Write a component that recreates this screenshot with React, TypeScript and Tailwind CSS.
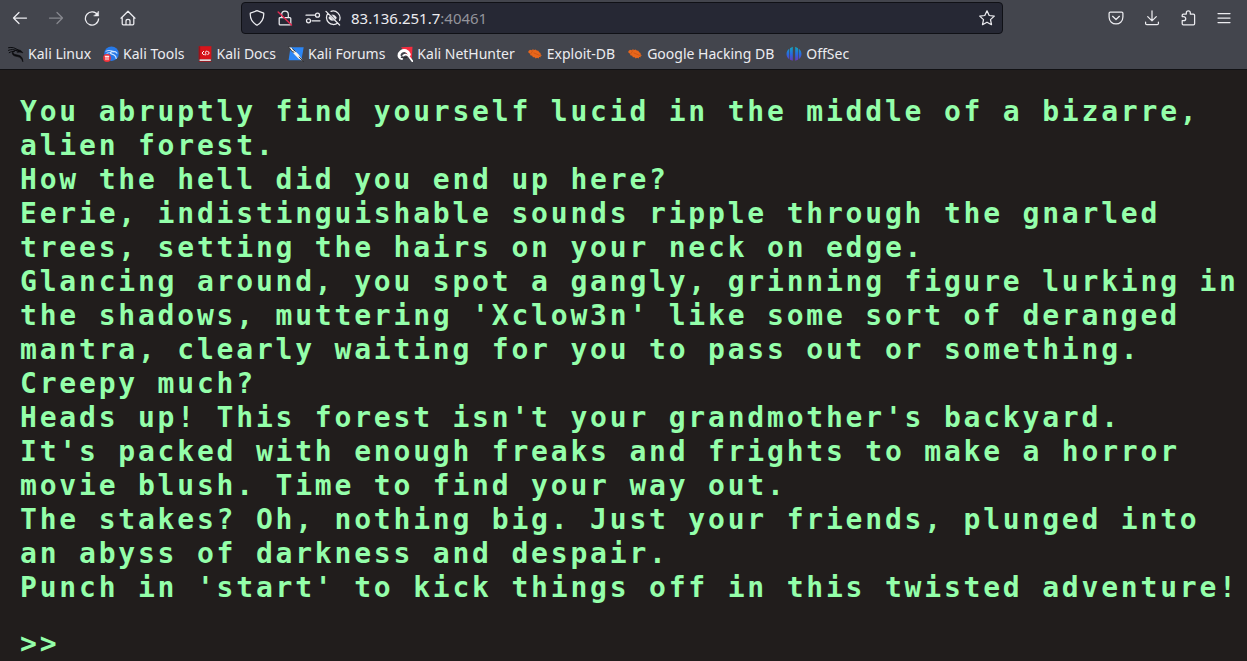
import type { ReactNode } from "react";

function Svg({ children, size = 16, stroke = "currentColor" }: { children: ReactNode; size?: number; stroke?: string }) {
  return (
    <svg width={size} height={size} viewBox="0 0 16 16" fill="none" stroke={stroke} strokeWidth="1.25" strokeLinecap="round" strokeLinejoin="round" aria-hidden="true">
      {children}
    </svg>
  );
}

const icons = {
  back: <Svg><path d="M14.500 8H1.500M7 2.500 1.500 8 7 13.500" /></Svg>,
  forward: <Svg><path d="M1.500 8h13M9 2.500 14.500 8 9 13.500" /></Svg>,
  reload: (
    <Svg>
      <path d="M13.700 5.200A6.600 6.600 0 1 0 14.600 8.800" />
      <path d="M14.600 1.400v4.600H10z" fill="currentColor" strokeWidth="0.5" />
    </Svg>
  ),
  home: <Svg><path d="M1 8.200 8 1.200l7 7M2.200 7.200v6.600c0 .7.400 1.100 1.100 1.100h9.400c.7 0 1.100-.4 1.100-1.100V7.200M6 14.700v-3.500c0-2.400 4-2.400 4 0v3.500" /></Svg>,
  shield: <Svg><path d="M8 .7 14.700 3.100c.4 5.400-1.700 9.300-6.700 12.200C3 12.400.9 8.500 1.300 3.100z" /></Svg>,
  lock: (
    <Svg>
      <path d="M4.700 7.500V4.300a3.300 3.300 0 0 1 6.600 0v3.200M3.200 7.500h9.600c.6 0 1 .4 1 1v5.400c0 .6-.4 1-1 1H3.200c-.6 0-1-.4-1-1V8.500c0-.6.400-1 1-1z" />
      <path d="M1.200 2 14.500 15" stroke="#e22850" strokeWidth="1.500" />
    </Svg>
  ),
  permissions: (
    <Svg>
      <path d="M1 5.200h8.500M7 10.800h8" />
      <circle cx="12.500" cy="5.200" r="2" />
      <circle cx="3.500" cy="10.800" r="2" />
    </Svg>
  ),
  tracking: (
    <Svg>
      <path d="M6 1.300A7 7 0 0 1 14.600 10.300M12.700 13.100A7 7 0 0 1 2.900 3.300M1 1.400 14.600 15" />
      <path d="M6.800 4.800c1.900-.3 3.700.9 4.800 2.900-.3.700-.7 1.300-1.200 1.700z" fill="currentColor" strokeWidth=".3" />
      <path d="M4.900 6.200C4.300 6.700 3.900 7.200 3.600 7.900c1 1.900 2.900 3 5.200 2.500z" fill="currentColor" strokeWidth=".3" />
    </Svg>
  ),
  star: <Svg><path d="m8 .8 2.200 4.700 5.100.6-3.800 3.500 1 5.100L8 12.200l-4.500 2.500 1-5.100L.7 6.100l5.100-.6z" /></Svg>,
  pocket: <Svg><path d="M2.300 2h11.400c.7 0 1.200.5 1.200 1.200v3.900c0 9-13.800 9-13.800 0V3.200C1.100 2.500 1.600 2 2.300 2zM4.600 6.300 8 9.500l3.400-3.200" /></Svg>,
  download: <Svg><path d="M8 .8v10M3.700 6.600 8 10.900l4.300-4.300M1.600 12.200v1.300c0 .7.500 1.200 1.200 1.200h10.400c.7 0 1.200-.5 1.200-1.200v-1.300" /></Svg>,
  extension: <Svg><path d="M2.200 6.600V5.200c0-.7.400-1.100 1.100-1.100h3V2.800c0-2.700 4-2.700 4 0v1.300h3.200c.7 0 1.100.4 1.100 1.100v8.600c0 .7-.4 1.100-1.100 1.100H3.300c-.7 0-1.100-.4-1.100-1.100v-3.200h1.500c2.700 0 2.700-3.900 0-3.900z" /></Svg>,
  menu: <Svg><path d="M2 3.500h12M2 8h12M2 12.500h12" /></Svg>,
};

const bug = (
  <Svg stroke="none">
    <path d="M1.300 5.300 3 3.800l1.800.4 1-1 1.400.8 1.500-.5 1 1 1.700.3.7 1.500 1.500.6-.1 1.300 1.500 1.300-1.500.2.300 1.500-1.700-.2-.5 1.600-1.500-.9-1.500.9-.9-1.300-1.800-.1-.7-1.400-1.900-.5-.2-1.500-1.600-1z" fill="#e8661b" />
    <path d="m5.800 4.700-2 3M7 7l5.500 2.300" stroke="#bd4e12" strokeWidth=".6" />
  </Svg>
);

const bookmarks: { name: string; icon: ReactNode }[] = [
  {
    name: "Kali Linux",
    icon: (
      <Svg stroke="#0b0c0f">
        <path d="M.5 1.700C4 .9 7 1.700 10 4M.5 4.300c3-1.200 5.500-.8 8 .2M1.200 6.700c1.500-1 3-1.400 5-1.200" strokeWidth="1" />
        <path d="M9 4c-3 .2-4.600 1.600-3.700 3.300 1.300 2.300 6.700.8 8.600 4.400.6 1 .9 2.500.9 4-.9-3-2.500-4.600-5.300-5.100-3.100-.5-5.600-1.500-5.200-4" fill="#0b0c0f" strokeWidth=".7" />
        <path d="m9.500 3.600 3.200.8 2.200 2.400-2.900-.7-2.600.2z" fill="#0b0c0f" strokeWidth=".6" />
      </Svg>
    ),
  },
  {
    name: "Kali Tools",
    icon: (
      <Svg stroke="none">
        <circle cx="8.500" cy="7.700" r="7.300" fill="#2779e8" />
        <path d="M3 5.200c3-1.500 5.700-.8 7.700.6M4 7.300c1.600-.8 3-.8 4.300-.4" stroke="#cfe5ff" strokeWidth=".9" />
        <path d="M9.800 5.300c-2.900.2-3.100 2.300-.8 2.800 2.500.6 3.800 1.300 4.200 4.200M9.800 5.300l2.800.6 1.300 1.300" stroke="#cfe5ff" strokeWidth="1.200" />
        <circle cx="4" cy="12" r="3.900" fill="#ef3038" />
        <path d="M2.200 10.300h3.600M3 10.300v3.500M5 10.300v3.500" stroke="#fff" strokeWidth="1" />
      </Svg>
    ),
  },
  {
    name: "Kali Docs",
    icon: (
      <Svg stroke="none">
        <path d="M1.800.2h12.600v13.400H1.800z" fill="#d7141a" />
        <path d="M1.800.2h1.400v13.400H1.800z" fill="#98141b" />
        <path d="M2.600 13.400h11.200v1.700H2.600z" fill="#eee" />
        <path d="M1.800 14.900h12.600v.9H1.800z" fill="#a51118" />
        <path d="M6.700 5.300 5 7l1.700 1.800M7.700 8.800C8.600 9.500 9.500 8.500 8.800 7.300S8.700 4.900 9.900 5.200M10.800 5.300 12.300 7l-1.600 1.800" stroke="#fff" strokeWidth="1" />
      </Svg>
    ),
  },
  {
    name: "Kali Forums",
    icon: (
      <Svg stroke="none">
        <path d="M2.500 1.200h13.200l-2.300 13H.6z" fill="#2b86f5" />
        <path d="m.5.900 3 .8 3.300 3 3.900 3.800 1.500 2.200 3.100 4.500-4.900-2.800-3.900-3.800-2-2.400z" fill="#f5f5f1" />
        <path d="m.5.900 3.600 4.700 1.800.6M11.200 11l4.100 4.500M4.500 2.800l2.800 2.500" stroke="#252525" strokeWidth=".9" />
      </Svg>
    ),
  },
  {
    name: "Kali NetHunter",
    icon: (
      <Svg stroke="none">
        <path d="M4 1.200 15.500.8l-.7 12.700z" fill="#f52d40" />
        <path d="M12.300 8.500C11 4.600 7 3.300 4 5.600 1 7.900 1.500 11.300 4.700 12.400" stroke="#fff" strokeWidth="3" />
        <path d="M6.200 9.700c1.700-1.500 3.800-1.300 5.500.5l3.700 5" stroke="#fff" strokeWidth="1.700" />
        <path d="m4.300 11.200 2.300.8 2.900-.6" stroke="#26272c" strokeWidth="1.200" />
      </Svg>
    ),
  },
  { name: "Exploit-DB", icon: bug },
  { name: "Google Hacking DB", icon: bug },
  {
    name: "OffSec",
    icon: (
      <Svg stroke="none">
        <defs>
          <linearGradient id="offsec" gradientUnits="userSpaceOnUse" x1="0" y1="1" x2="0" y2="15">
            <stop stopColor="#13a5bd" />
            <stop offset=".5" stopColor="#276be0" />
            <stop offset="1" stopColor="#6a35b9" />
          </linearGradient>
        </defs>
        <path d="M3.300 2.700v10.600C-.4 11-.4 5 3.300 2.700zM4 2.200 6.800.8v14l-2.800-1zM9.200.8 12 2.200v11.600l-2.800 1zM12.700 2.700c3.700 2.300 3.700 8.300 0 10.600z" fill="url(#offsec)" />
      </Svg>
    ),
  },
];

const story = [
  "You abruptly find yourself lucid in the middle of a bizarre, alien forest.",
  "How the hell did you end up here?",
  "Eerie, indistinguishable sounds ripple through the gnarled trees, setting the hairs on your neck on edge.",
  "Glancing around, you spot a gangly, grinning figure lurking in the shadows, muttering 'Xclow3n' like some sort of deranged mantra, clearly waiting for you to pass out or something.",
  "Creepy much?",
  "Heads up! This forest isn't your grandmother's backyard.",
  "It's packed with enough freaks and frights to make a horror movie blush. Time to find your way out.",
  "The stakes? Oh, nothing big. Just your friends, plunged into an abyss of darkness and despair.",
  "Punch in 'start' to kick things off in this twisted adventure!",
];

function IconButton({ label, children, disabled }: { label: string; children: ReactNode; disabled?: boolean }) {
  return (
    <button type="button" aria-label={label} disabled={disabled} className="flex size-9 items-center justify-center disabled:opacity-40">
      {children}
    </button>
  );
}

export default function App() {
  return (
    <div className="flex min-h-screen flex-col bg-[#211d1c]">
      <header className="border-b border-[#111114] bg-[#43454d] font-['Noto_Sans',sans-serif] text-[#ececf0]">
        <div className="flex h-9 items-center justify-between pr-[5px] pl-0.5">
          <nav aria-label="Navigation" className="flex">
            <IconButton label="Back">{icons.back}</IconButton>
            <IconButton label="Forward" disabled>{icons.forward}</IconButton>
            <IconButton label="Reload">{icons.reload}</IconButton>
            <IconButton label="Home">{icons.home}</IconButton>
          </nav>
          <div className="mx-[95px] flex h-8 flex-1 items-center rounded border border-[#101116] bg-[#262834] px-[7px]">
            <button type="button" aria-label="Tracking protection">{icons.shield}</button>
            <button type="button" aria-label="Connection is not secure" className="ml-3">{icons.lock}</button>
            <button type="button" aria-label="Permissions" className="ml-3">{icons.permissions}</button>
            <button type="button" aria-label="Blocked trackers" className="ml-1">{icons.tracking}</button>
            <div role="textbox" aria-label="Address" contentEditable suppressContentEditableWarning className="ml-2.5 flex-1 text-[15px] outline-none">
              83.136.251.7<span className="text-[#92939a]">:40461</span>
            </div>
            <button type="button" aria-label="Bookmark this page">{icons.star}</button>
          </div>
          <div className="flex">
            <IconButton label="Save to Pocket">{icons.pocket}</IconButton>
            <IconButton label="Downloads">{icons.download}</IconButton>
            <IconButton label="Extensions">{icons.extension}</IconButton>
            <IconButton label="Menu">{icons.menu}</IconButton>
          </div>
        </div>
        <nav aria-label="Bookmarks" className="flex h-[33px] items-center gap-3 pt-0.5 pl-2 text-sm">
          {bookmarks.map((b) => (
            <a key={b.name} href="#" className="flex items-center gap-1 whitespace-nowrap">
              {b.icon}
              {b.name}
            </a>
          ))}
        </nav>
      </header>
      <main className="flex-1 pt-[25px] pl-5 font-['DejaVu_Sans_Mono',monospace] text-[28px] leading-[34px] font-bold tracking-widest text-[#94ffaa]">
        {story.map((line) => (
          <p key={line}>{line}</p>
        ))}
        <label className="mt-[22px] flex">
          <span>&gt;&gt;</span>
          <input aria-label="Command" className="ml-2 h-8 min-w-0 flex-1 bg-transparent outline-none" />
        </label>
      </main>
    </div>
  );
}
